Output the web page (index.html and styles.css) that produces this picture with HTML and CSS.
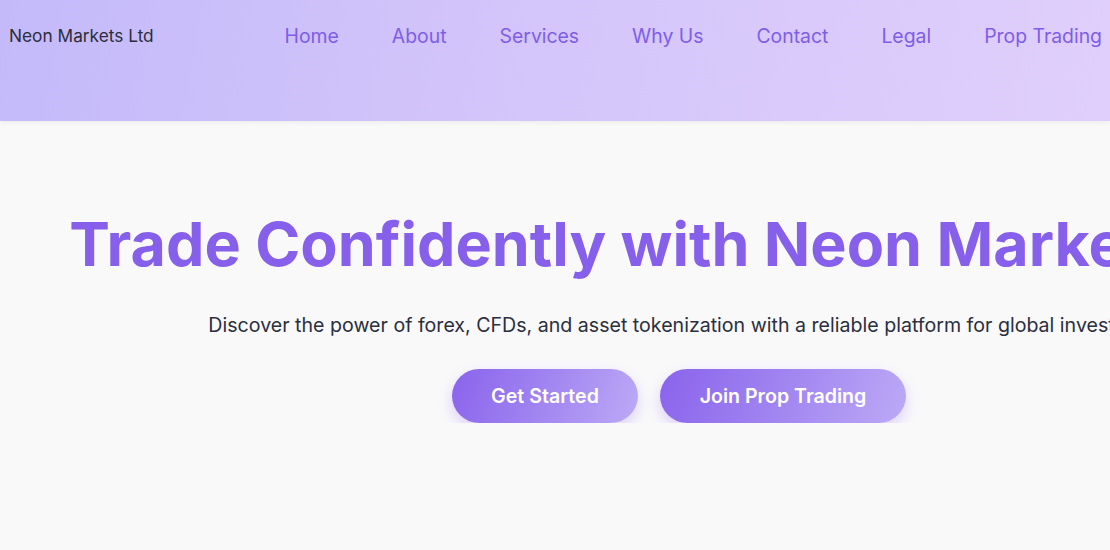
FILE: index.html
```html
<!DOCTYPE html>
<html lang="en">
<head>
<meta charset="utf-8">
<title>Neon Markets Ltd</title>
<link rel="stylesheet" href="styles.css">
</head>
<body>
<div class="page">
  <header class="site-header">
    <div class="logo">Neon Markets Ltd</div>
    <nav class="nav">
      <a href="#">Home</a>
      <a href="#">About</a>
      <a href="#">Services</a>
      <a href="#">Why Us</a>
      <a href="#">Contact</a>
      <a href="#">Legal</a>
      <a href="#">Prop Trading</a>
    </nav>
  </header>
  <section class="hero">
    <h1 class="hero-title">Trade Confidently with Neon Markets Ltd</h1>
    <p class="hero-sub">Discover the power of forex, CFDs, and asset tokenization with a reliable platform for global investors.</p>
    <div class="hero-actions">
      <a href="#" class="btn btn-start">Get Started</a>
      <a href="#" class="btn btn-prop">Join Prop Trading</a>
    </div>
  </section>
</div>
</body>
</html>
```
FILE: styles.css
```css
* { box-sizing: border-box; }
html, body { margin: 0; padding: 0; }
body {
  font-family: Inter, "Noto Sans", sans-serif;
  background: #f9f9fa;
  color: #2b2f3e;
}
.page { width: 1358px; }
.site-header {
  height: 121px;
  display: flex;
  justify-content: space-between;
  align-items: flex-start;
  padding: 24px 8px 0 9px;
  background: linear-gradient(100deg, #c4bafa 0%, #d3c5fa 45%, #e0cffc 100%);
  box-shadow: 0 2px 4px rgba(0,0,0,0.05);
  width: 1110px;
}
.logo {
  font-size: 17.3px;
  color: #2b2d3a;
  line-height: 24px;
}
.nav {
  display: flex;
  gap: 53px;
  margin-top: -1px;
}
.nav a {
  color: #7f5de8;
  text-decoration: none;
  font-size: 19.4px;
  line-height: 26px;
}
.hero {
  padding-top: 86px;
  text-align: center;
}
.hero-title {
  margin: 0;
  font-size: 61px;
  font-weight: 700;
  line-height: 74px;
  color: #8660ea;
  white-space: nowrap;
}
.hero-sub {
  margin: 30px 0 0;
  font-size: 19.6px;
  line-height: 28px;
  color: #2b2f3e;
  white-space: nowrap;
}
.hero-actions {
  margin-top: 30px;
  display: flex;
  justify-content: center;
  gap: 22px;
}
.btn {
  display: inline-flex;
  align-items: center;
  justify-content: center;
  height: 54px;
  border-radius: 27px;
  color: #fff;
  font-size: 19.6px;
  font-weight: 600;
  text-decoration: none;
  background: linear-gradient(110deg, #8a63ec 0%, #a489f1 55%, #bcaaf6 100%);
  box-shadow: 0 6px 14px rgba(139, 92, 246, 0.25);
}
.btn-start { width: 186px; }
.btn-prop { width: 246px; }
```
